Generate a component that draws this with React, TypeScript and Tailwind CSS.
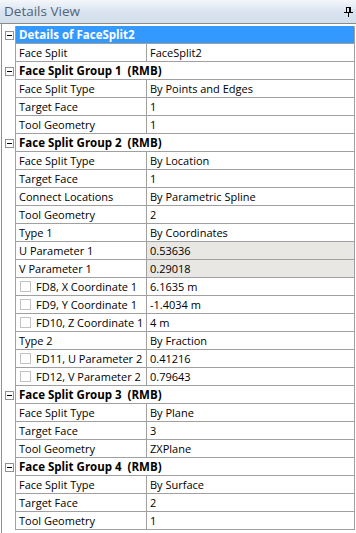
type Row =
  | { kind: 'title'; label: string }
  | { kind: 'group'; label: string }
  | { kind: 'prop'; label: string; value: string; check?: boolean; shaded?: boolean }

const rows: Row[] = [
  { kind: 'title', label: 'Details of FaceSplit2' },
  { kind: 'prop', label: 'Face Split', value: 'FaceSplit2' },
  { kind: 'group', label: 'Face Split Group 1  (RMB)' },
  { kind: 'prop', label: 'Face Split Type', value: 'By Points and Edges' },
  { kind: 'prop', label: 'Target Face', value: '1' },
  { kind: 'prop', label: 'Tool Geometry', value: '1' },
  { kind: 'group', label: 'Face Split Group 2  (RMB)' },
  { kind: 'prop', label: 'Face Split Type', value: 'By Location' },
  { kind: 'prop', label: 'Target Face', value: '1' },
  { kind: 'prop', label: 'Connect Locations', value: 'By Parametric Spline' },
  { kind: 'prop', label: 'Tool Geometry', value: '2' },
  { kind: 'prop', label: 'Type 1', value: 'By Coordinates' },
  { kind: 'prop', label: 'U Parameter 1', value: '0.53636', shaded: true },
  { kind: 'prop', label: 'V Parameter 1', value: '0.29018', shaded: true },
  { kind: 'prop', label: 'FD8, X Coordinate 1', value: '6.1635 m', check: true },
  { kind: 'prop', label: 'FD9, Y Coordinate 1', value: '-1.4034 m', check: true },
  { kind: 'prop', label: 'FD10, Z Coordinate 1', value: '4 m', check: true },
  { kind: 'prop', label: 'Type 2', value: 'By Fraction' },
  { kind: 'prop', label: 'FD11, U Parameter 2', value: '0.41216', check: true },
  { kind: 'prop', label: 'FD12, V Parameter 2', value: '0.79643', check: true },
  { kind: 'group', label: 'Face Split Group 3  (RMB)' },
  { kind: 'prop', label: 'Face Split Type', value: 'By Plane' },
  { kind: 'prop', label: 'Target Face', value: '3' },
  { kind: 'prop', label: 'Tool Geometry', value: 'ZXPlane' },
  { kind: 'group', label: 'Face Split Group 4  (RMB)' },
  { kind: 'prop', label: 'Face Split Type', value: 'By Surface' },
  { kind: 'prop', label: 'Target Face', value: '2' },
  { kind: 'prop', label: 'Tool Geometry', value: '1' },
]

function MinusBox() {
  return (
    <div className="w-[9px] h-[9px] border border-[#919191] bg-white flex items-center justify-center">
      <div className="w-[5px] h-px bg-black" />
    </div>
  )
}

function PinIcon() {
  return (
    <svg width="9" height="10" viewBox="0 0 9 10" shapeRendering="crispEdges">
      <rect x="2.5" y="0.5" width="4" height="5" fill="none" stroke="#000" />
      <rect x="5" y="0" width="2" height="6" fill="#000" />
      <rect x="0" y="5" width="9" height="1" fill="#000" />
      <rect x="4" y="6" width="1" height="4" fill="#000" />
    </svg>
  )
}

export default function App() {
  return (
    <div
      className="w-[356px] h-[533px] bg-white overflow-hidden text-[11px] text-black"
      style={{ fontFamily: '"Open Sans", "Noto Sans", sans-serif' }}
    >
      <div className="h-[24px] border-b border-[#8a8a8a] bg-gradient-to-b from-[#f4f7fb] via-[#dae4f0] to-[#d3dfec] flex items-center justify-between pl-[4px] pr-[3px]">
        <span className="text-[13.5px] text-[#536377]">Details View</span>
        <PinIcon />
      </div>
      <div className="ml-px border-l border-[#8f8f8f] h-[509px] pt-[2px]">
        {rows.map((row, i) => (
          <div key={i} className="flex h-[18px]">
            <div className="w-[13px] flex items-center justify-center pl-px">
              {row.kind !== 'prop' && <MinusBox />}
            </div>
            <div className="w-[340px] flex border-l border-r border-b border-[#a0a0a0]">
              {row.kind === 'title' && (
                <div className="flex-1 bg-[#3399ff] text-white font-bold text-[11.5px] pl-[3px] leading-[17px] whitespace-pre">{row.label}</div>
              )}
              {row.kind === 'group' && (
                <div className="flex-1 font-bold text-[11.5px] pl-[3px] leading-[17px] whitespace-pre">{row.label}</div>
              )}
              {row.kind === 'prop' && (
                <>
                  <div className="w-[131px] shrink-0 border-r border-[#a0a0a0] pl-[3px] leading-[17px] flex items-center whitespace-nowrap overflow-hidden">
                    {row.check && (
                      <div className="w-[11px] h-[11px] shrink-0 border border-[#c2c2c2] bg-white mr-[5px] ml-[1px]" />
                    )}
                    {row.label}
                  </div>
                  <div className={`flex-1 pl-[3px] leading-[17px] whitespace-nowrap ${row.shaded ? 'bg-[#e8e7e3]' : ''}`}>
                    {row.value}
                  </div>
                </>
              )}
            </div>
          </div>
        ))}
      </div>
    </div>
  )
}
